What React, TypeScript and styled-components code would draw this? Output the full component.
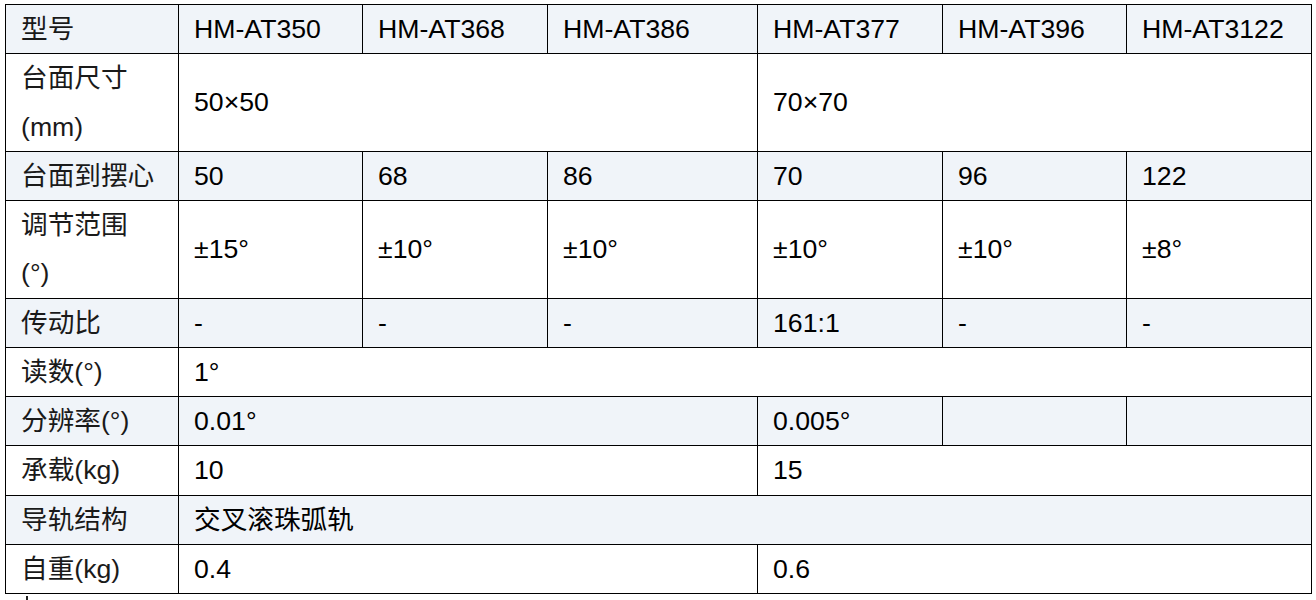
import React from "react";
import styled, { createGlobalStyle } from "styled-components";

const Global = createGlobalStyle`
  html, body { margin: 0; padding: 0; background: #fff; }
  body {
    font-family: "Liberation Sans", "Noto Sans CJK SC", sans-serif;
    color: #000;
  }
`;

const Page = styled.div`
  padding: 4px 0 0 5px;
`;

const Table = styled.table`
  width: 1307px;
  table-layout: fixed;
  border-collapse: collapse;
  font-size: 26.67px;
  line-height: 48.25px;
`;

const Row = styled.tr<{ $shade?: boolean }>`
  background: ${(p) => (p.$shade ? "#f0f4f9" : "#ffffff")};
`;

const Cell = styled.td`
  border: 1px solid #000;
  padding: 0 14px 0 15px;
  vertical-align: middle;
  white-space: nowrap;
  overflow: hidden;
`;

const Label = styled(Cell)`
  white-space: normal;
  color: #1a1a1a;
`;

const Mark = styled.div`
  padding: 2px 0 0 21px;
  height: 4px;
  & > span {
    display: block;
    width: 2px;
    height: 4px;
    background: #222;
  }
`;

const widths = [173, 184, 185, 210, 185, 184, 185];

type C = { t: string; span?: number };
type R = { label: React.ReactNode; cells: C[] };

const rows: R[] = [
  {
    label: "型号",
    cells: [
      { t: "HM-AT350" },
      { t: "HM-AT368" },
      { t: "HM-AT386" },
      { t: "HM-AT377" },
      { t: "HM-AT396" },
      { t: "HM-AT3122" },
    ],
  },
  {
    label: (
      <>
        台面尺寸
        <br />
        (mm)
      </>
    ),
    cells: [
      { t: "50×50", span: 3 },
      { t: "70×70", span: 3 },
    ],
  },
  {
    label: "台面到摆心",
    cells: [{ t: "50" }, { t: "68" }, { t: "86" }, { t: "70" }, { t: "96" }, { t: "122" }],
  },
  {
    label: (
      <>
        调节范围
        <br />
        (°)
      </>
    ),
    cells: [
      { t: "±15°" },
      { t: "±10°" },
      { t: "±10°" },
      { t: "±10°" },
      { t: "±10°" },
      { t: "±8°" },
    ],
  },
  {
    label: "传动比",
    cells: [{ t: "-" }, { t: "-" }, { t: "-" }, { t: "161:1" }, { t: "-" }, { t: "-" }],
  },
  { label: "读数(°)", cells: [{ t: "1°", span: 6 }] },
  {
    label: "分辨率(°)",
    cells: [{ t: "0.01°", span: 3 }, { t: "0.005°" }, { t: "" }, { t: "" }],
  },
  {
    label: "承载(kg)",
    cells: [
      { t: "10", span: 3 },
      { t: "15", span: 3 },
    ],
  },
  { label: "导轨结构", cells: [{ t: "交叉滚珠弧轨", span: 6 }] },
  {
    label: "自重(kg)",
    cells: [
      { t: "0.4", span: 3 },
      { t: "0.6", span: 3 },
    ],
  },
];

export default function App() {
  return (
    <Page>
      <Global />
      <Table>
        <colgroup>
          {widths.map((w, i) => (
            <col key={i} style={{ width: w }} />
          ))}
        </colgroup>
        <tbody>
          {rows.map((r, i) => (
            <Row key={i} $shade={i % 2 === 0}>
              <Label>{r.label}</Label>
              {r.cells.map((c, j) => (
                <Cell key={j} colSpan={c.span}>
                  {c.t}
                </Cell>
              ))}
            </Row>
          ))}
        </tbody>
      </Table>
      <Mark>
        <span />
      </Mark>
    </Page>
  );
}
